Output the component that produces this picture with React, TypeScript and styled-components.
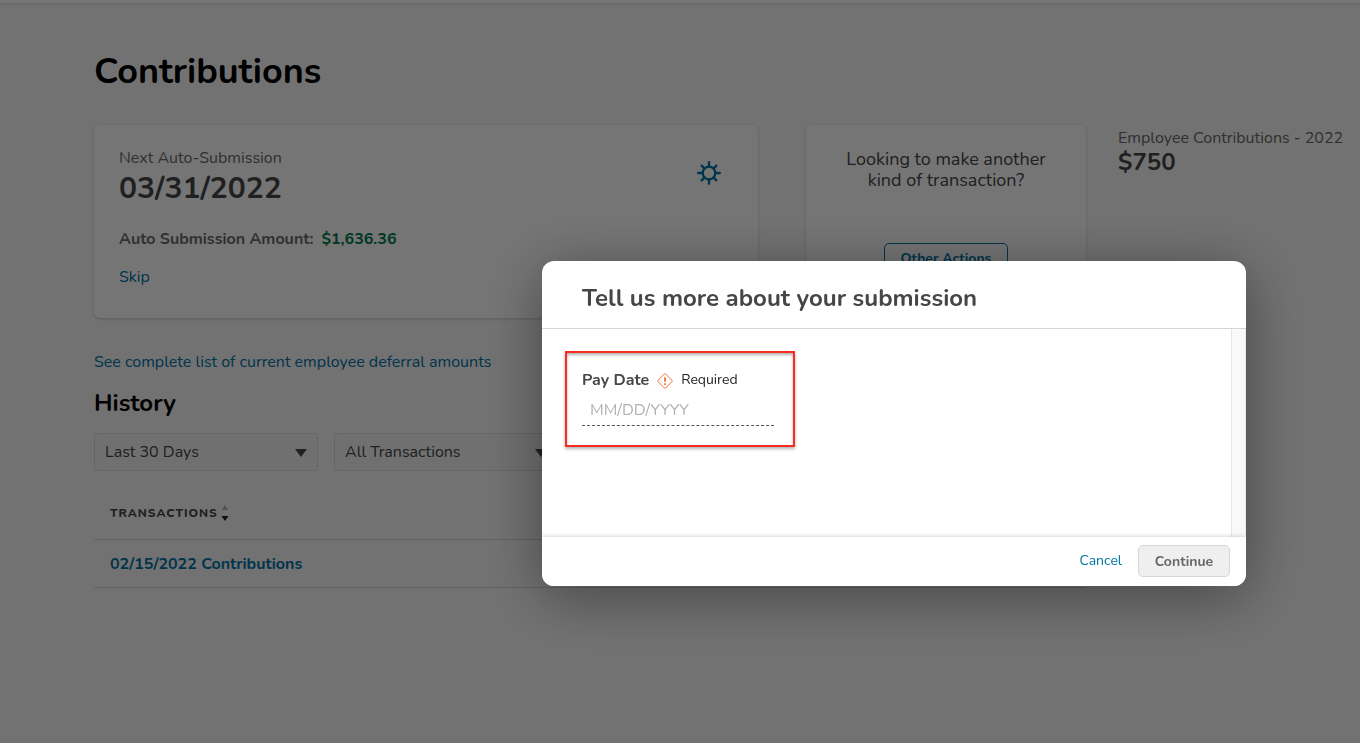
import React from "react";
import styled, { createGlobalStyle } from "styled-components";

const colors = {
  page: "#f8f8f8",
  link: "#0073a5",
  text: "#464646",
  muted: "#6a6a6a",
  line: "#d6d6d6",
  green: "#007a4f",
};

const GlobalStyle = createGlobalStyle`
  *, *::before, *::after { box-sizing: border-box; }
  html, body { margin: 0; min-height: 100%; background: ${colors.page}; }
  body, button, input, select { font-family: Nunito, Lato, sans-serif; }
  body { color: ${colors.text}; font-size: 16px; line-height: 24px; overflow: hidden; }
  h1, h2, p { margin: 0; }
`;

const Page = styled.div`
  min-height: 100vh;
`;

const TopBar = styled.header`
  height: 3px;
  background: #fff;
  box-shadow: 0 1px 4px rgba(0, 0, 0, 0.16);
`;

const Content = styled.div`
  display: flex;
  gap: 32px;
  padding: 45px 16px 0 94px;
`;

const Main = styled.main`
  flex: 1;
  min-width: 0;
`;

const PageTitle = styled.h1`
  color: #000;
  font-size: 36px;
  line-height: 48px;
`;

const Cards = styled.div`
  display: grid;
  grid-template-columns: minmax(0, 1fr) 280px;
  gap: 48px;
  margin-top: 29px;
`;

const Card = styled.section`
  min-height: 193px;
  padding: 22px 24px;
  border: 1px solid #fff;
  border-radius: 6px;
  background: #fff;
  box-shadow: 0 1px 3px rgba(0, 0, 0, 0.18);
`;

const SubmissionCard = styled(Card)`
  display: flex;
  justify-content: space-between;
  align-items: flex-start;
`;

const ActionCard = styled(Card)`
  display: flex;
  flex-direction: column;
  align-items: center;
  justify-content: space-between;
  padding: 23px 24px 42px;
  text-align: center;
`;

const Prompt = styled.p`
  width: 210px;
  font-size: 18px;
  line-height: 21px;
`;

const Label = styled.p`
  color: ${colors.muted};
  line-height: 20px;
  white-space: nowrap;
`;

const Figure = styled.p<{ $large?: boolean }>`
  font-size: ${(p) => (p.$large ? 30 : 24)}px;
  font-weight: 700;
  line-height: ${(p) => (p.$large ? 41 : 28)}px;
`;

const AmountRow = styled.p`
  margin: 18px 0 14px;
  color: ${colors.muted};
  font-weight: 700;
`;

const Amount = styled.span`
  margin-left: 8px;
  color: ${colors.green};
`;

const Link = styled.a<{ $strong?: boolean }>`
  color: ${colors.link};
  font-weight: ${(p) => (p.$strong ? 700 : 400)};
  text-decoration: none;
`;

const IconButton = styled.button`
  display: flex;
  margin: 13px 12px;
  padding: 0;
  border: 0;
  background: none;
  color: ${colors.link};
`;

const OutlineButton = styled.button`
  height: 32px;
  width: 124px;
  padding: 0 0 2px;
  border: 1px solid ${colors.link};
  border-radius: 5px;
  background: #fff;
  color: ${colors.link};
  font-size: 14px;
  font-weight: 700;
`;

const Aside = styled.aside`
  flex: none;
  width: 226px;
  padding-top: 80px;
`;

const DeferralLine = styled.p`
  margin-top: 32px;
`;

const SectionTitle = styled.h2`
  margin-top: 14px;
  color: #000;
  font-size: 24px;
  line-height: 30px;
`;

const Filters = styled.div`
  display: flex;
  gap: 16px;
  margin-top: 15px;
`;

const SelectBox = styled.div`
  position: relative;
  width: 224px;
`;

const Select = styled.select`
  width: 100%;
  height: 38px;
  padding: 0 10px;
  border: 1px solid #dcdcdc;
  border-radius: 3px;
  appearance: none;
  background: #f4f4f4;
  color: ${colors.text};
  font-size: 16px;
`;

const SelectArrow = styled.svg`
  position: absolute;
  top: 16px;
  right: 10px;
  pointer-events: none;
`;

const Table = styled.table`
  width: 100%;
  margin-top: 16px;
  border-collapse: collapse;
  text-align: left;
`;

const Th = styled.th`
  height: 52px;
  padding: 0 16px;
  border-bottom: 1px solid ${colors.line};
  font-size: 12px;
  font-weight: 800;
  letter-spacing: 1px;
`;

const SortLabel = styled.span`
  display: flex;
  align-items: center;
  gap: 3px;
`;

const Td = styled.td`
  height: 48px;
  padding: 1px 16px 0;
  border-bottom: 1px solid ${colors.line};
`;

const Overlay = styled.div`
  position: fixed;
  inset: 0;
  display: flex;
  align-items: flex-start;
  justify-content: flex-end;
  padding: 261px 114px 0 0;
  background: rgba(0, 0, 0, 0.54);
`;

const Dialog = styled.div`
  width: 704px;
  border-radius: 12px;
  background: #fff;
  box-shadow: 0 10px 60px rgba(0, 0, 0, 0.4);
  overflow: hidden;
`;

const DialogHeader = styled.header`
  padding: 22px 40px 15px;
  border-bottom: 1px solid ${colors.line};
`;

const DialogTitle = styled.h2`
  font-size: 24px;
  line-height: 30px;
`;

const DialogBody = styled.div`
  display: flex;
  height: 208px;
`;

const Form = styled.div`
  flex: 1;
  padding: 22px 23px;
`;

const ScrollTrack = styled.div`
  width: 15px;
  border-left: 1px solid #e6e6e6;
  border-right: 1px solid #ececec;
  background: #f9f9f9;
`;

const Field = styled.div`
  width: 230px;
  height: 96px;
  padding: 14px 15px 0;
  border: 2px solid #fb2c1e;
  box-shadow: 0 2px 3px rgba(0, 0, 0, 0.3), inset 0 2px 3px rgba(0, 0, 0, 0.3);
`;

const FieldHead = styled.div`
  display: flex;
  align-items: center;
  gap: 8px;
  height: 26px;
`;

const FieldLabel = styled.label`
  font-weight: 700;
`;

const Required = styled.span`
  color: #222;
  font-size: 14px;
`;

const DateInput = styled.input`
  display: block;
  width: 192px;
  height: 33px;
  padding: 2px 8px 0;
  border: 0;
  border-bottom: 1px dashed #555;
  outline: 0;
  background: transparent;
  font-size: 16px;
  &::placeholder { color: #b0b0b0; opacity: 1; }
`;

const DialogFooter = styled.footer`
  position: relative;
  display: flex;
  align-items: center;
  justify-content: flex-end;
  gap: 16px;
  height: 49px;
  padding: 0 16px 2px;
  background: #fff;
  box-shadow: 0 0 5px rgba(0, 0, 0, 0.22);
`;

const TextButton = styled.button`
  padding: 0;
  border: 0;
  background: none;
  color: ${colors.link};
  font-size: 14px;
`;

const ContinueButton = styled.button`
  width: 92px;
  height: 32px;
  padding: 2px 0 0;
  border: 1px solid ${colors.line};
  border-radius: 5px;
  background: #efefef;
  color: #666;
  font-size: 14px;
  font-weight: 700;
`;

function GearIcon() {
  const angles = [0, 45, 90, 135, 180, 225, 270, 315];
  return (
    <svg width="24" height="24" viewBox="0 0 24 24" fill="none" stroke="currentColor" strokeWidth="2.3" strokeLinecap="round">
      <circle cx="12" cy="12" r="6.3" />
      {angles.map((a) => (
        <path key={a} d={a % 90 ? "M12 5.4V1.6" : "M12 5.4V1.2"} transform={`rotate(${a} 12 12)`} />
      ))}
    </svg>
  );
}

function WarningIcon() {
  return (
    <svg width="16" height="18" viewBox="0 -2 16 18" fill="none" stroke="#f4703c">
      <path d="M7.3 1Q8 .3 8.7 1L15 7.3Q15.7 8 15 8.7L8.7 15Q8 15.7 7.3 15L1 8.7Q.3 8 1 7.3Z" />
      <path d="M8 4.2V8.7M8 10.2V12" strokeWidth="1.8" />
    </svg>
  );
}

function SortIcon() {
  return (
    <svg width="8" height="16" viewBox="0 0 8 16">
      <path d="M1 5L4 0L7 5Z" fill="#b4b4b4" />
      <path d="M.5 11H7.5L4 16Z" fill="#222" />
    </svg>
  );
}

function Filter({ label, value }: { label: string; value: string }) {
  return (
    <SelectBox>
      <Select aria-label={label} defaultValue={value}>
        <option>{value}</option>
      </Select>
      <SelectArrow width="14" height="8" viewBox="0 0 14 8">
        <path d="M1 0H13L7 8Z" fill={colors.text} />
      </SelectArrow>
    </SelectBox>
  );
}

export default function App() {
  return (
    <>
      <GlobalStyle />
      <Page>
        <TopBar />
        <Content>
          <Main>
            <PageTitle>Contributions</PageTitle>
            <Cards>
              <SubmissionCard>
                <div>
                  <Label>Next Auto-Submission</Label>
                  <Figure $large>03/31/2022</Figure>
                  <AmountRow>
                    Auto Submission Amount:<Amount>$1,636.36</Amount>
                  </AmountRow>
                  <Link href="#skip">Skip</Link>
                </div>
                <IconButton type="button" aria-label="Settings">
                  <GearIcon />
                </IconButton>
              </SubmissionCard>
              <ActionCard>
                <Prompt>Looking to make another kind of transaction?</Prompt>
                <OutlineButton type="button">Other Actions</OutlineButton>
              </ActionCard>
            </Cards>
            <DeferralLine>
              <Link href="#deferrals">See complete list of current employee deferral amounts</Link>
            </DeferralLine>
            <SectionTitle>History</SectionTitle>
            <Filters>
              <Filter label="Period" value="Last 30 Days" />
              <Filter label="Transaction type" value="All Transactions" />
            </Filters>
            <Table>
              <thead>
                <tr>
                  <Th>
                    <SortLabel>
                      TRANSACTIONS
                      <SortIcon />
                    </SortLabel>
                  </Th>
                </tr>
              </thead>
              <tbody>
                <tr>
                  <Td>
                    <Link $strong href="#transaction">02/15/2022 Contributions</Link>
                  </Td>
                </tr>
              </tbody>
            </Table>
          </Main>
          <Aside>
            <Label>Employee Contributions - 2022</Label>
            <Figure>$750</Figure>
          </Aside>
        </Content>
      </Page>
      <Overlay>
        <Dialog role="dialog" aria-modal="true" aria-labelledby="dialog-title">
          <DialogHeader>
            <DialogTitle id="dialog-title">Tell us more about your submission</DialogTitle>
          </DialogHeader>
          <DialogBody>
            <Form>
              <Field>
                <FieldHead>
                  <FieldLabel htmlFor="pay-date">Pay Date</FieldLabel>
                  <WarningIcon />
                  <Required>Required</Required>
                </FieldHead>
                <DateInput id="pay-date" type="text" placeholder="MM/DD/YYYY" />
              </Field>
            </Form>
            <ScrollTrack />
          </DialogBody>
          <DialogFooter>
            <TextButton type="button">Cancel</TextButton>
            <ContinueButton type="button">Continue</ContinueButton>
          </DialogFooter>
        </Dialog>
      </Overlay>
    </>
  );
}
